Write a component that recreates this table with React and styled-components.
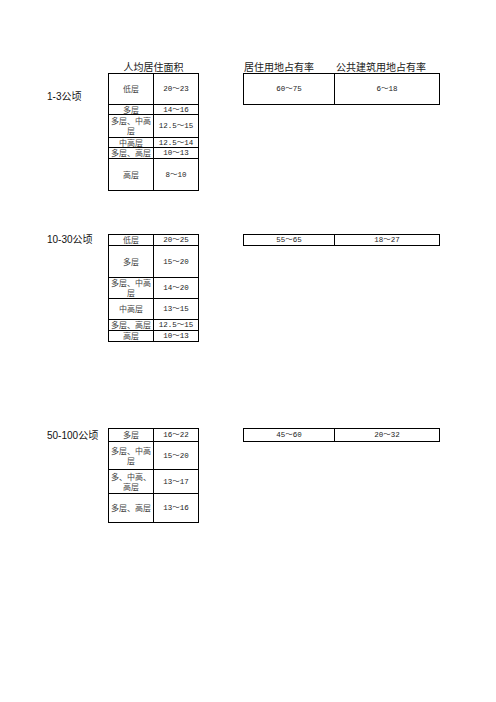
import React from "react";
import styled, { createGlobalStyle } from "styled-components";

const GlobalStyle = createGlobalStyle`
  html, body {
    margin: 0;
    padding: 0;
    background: #fff;
  }
  body {
    font-family: "Noto Sans CJK SC", "Liberation Serif", serif;
    color: #000;
  }
`;

// data for the three size bands
const sections = [
  {
    label: "1-3公顷",
    labelTop: 18,
    gap: 0,
    rows: [
      ["低层", "20～23", 30],
      ["多层", "14～16", 9],
      ["多层、中高层", "12.5～15", 22],
      ["中高层", "12.5～14", 9],
      ["多层、高层", "10～13", 10],
      ["高层", "8～10", 31],
    ],
    ratio: ["60～75", "6～18", 30],
  },
  {
    label: "10-30公顷",
    labelTop: 0,
    gap: 43,
    rows: [
      ["低层", "20～25", 10],
      ["多层", "15～20", 31],
      ["多层、中高层", "14～20", 20],
      ["中高层", "13～15", 20],
      ["多层、高层", "12.5～15", 10],
      ["高层", "10～13", 10],
    ],
    ratio: ["55～65", "18～27", 10],
  },
  {
    label: "50-100公顷",
    labelTop: 2,
    gap: 86,
    rows: [
      ["多层", "16～22", 12],
      ["多层、中高层", "15～20", 27],
      ["多、中高、高层", "13～17", 23],
      ["多层、高层", "13～16", 28],
    ],
    ratio: ["45～60", "20～32", 12],
  },
];

const Page = styled.div`
  display: flex;
  flex-direction: column;
  padding: 61px 0 0 47px;
  width: 496px;
  height: 702px;
  box-sizing: border-box;
`;

const HeaderRow = styled.div`
  display: flex;
  height: 12px;
  font-size: 10px;
  line-height: 12px;
  white-space: nowrap;
  color: #222;
`;

const HeadSpacer = styled.div`
  width: 61px;
`;

const HeadCenter = styled.div`
  width: 91px;
  text-align: center;
`;

const HeadRight = styled.div`
  display: flex;
  margin-left: 44px;
`;

const HeadCol = styled.div`
  width: ${p => p.$w}px;
  padding-left: 1px;
`;

const Section = styled.div`
  display: flex;
  align-items: flex-start;
  margin-top: ${p => p.$gap}px;
`;

const Label = styled.div`
  width: 61px;
  padding-top: ${p => p.$top}px;
  font-family: "Liberation Sans", "Noto Sans CJK SC", sans-serif;
  font-size: 10px;
  line-height: 12px;
  white-space: nowrap;
  color: #111;
`;

const Grid = styled.div`
  display: grid;
  grid-template-columns: ${p => p.$cols};
  grid-template-rows: ${p => p.$rows};
  gap: 1px;
  padding: 1px;
  background: #000;
  margin-left: ${p => p.$ml || 0}px;
`;

const Cell = styled.div`
  background: #fff;
  display: flex;
  align-items: center;
  justify-content: center;
  text-align: center;
  font-size: 8px;
  line-height: 10px;
  color: #444;
  overflow: visible;
`;

const Num = styled(Cell)`
  font-family: "Liberation Mono", "Noto Sans CJK SC", monospace;
  font-size: 7.5px;
  white-space: nowrap;
  color: #222;
`;

export default function App() {
  return (
    <>
      <GlobalStyle />
      <Page>
        <HeaderRow>
          <HeadSpacer />
          <HeadCenter>人均居住面积</HeadCenter>
          <HeadRight>
            <HeadCol $w={91}>居住用地占有率</HeadCol>
            <HeadCol $w={105}>公共建筑用地占有率</HeadCol>
          </HeadRight>
        </HeaderRow>
        {sections.map(s => (
          <Section key={s.label} $gap={s.gap}>
            <Label $top={s.labelTop}>{s.label}</Label>
            <Grid $cols="44px 44px" $rows={s.rows.map(r => r[2] + "px").join(" ")}>
              {s.rows.map(r => (
                <React.Fragment key={r[0]}>
                  <Cell>{r[0]}</Cell>
                  <Num>{r[1]}</Num>
                </React.Fragment>
              ))}
            </Grid>
            <Grid $cols="90px 104px" $rows={s.ratio[2] + "px"} $ml={44}>
              <Num>{s.ratio[0]}</Num>
              <Num>{s.ratio[1]}</Num>
            </Grid>
          </Section>
        ))}
      </Page>
    </>
  );
}
